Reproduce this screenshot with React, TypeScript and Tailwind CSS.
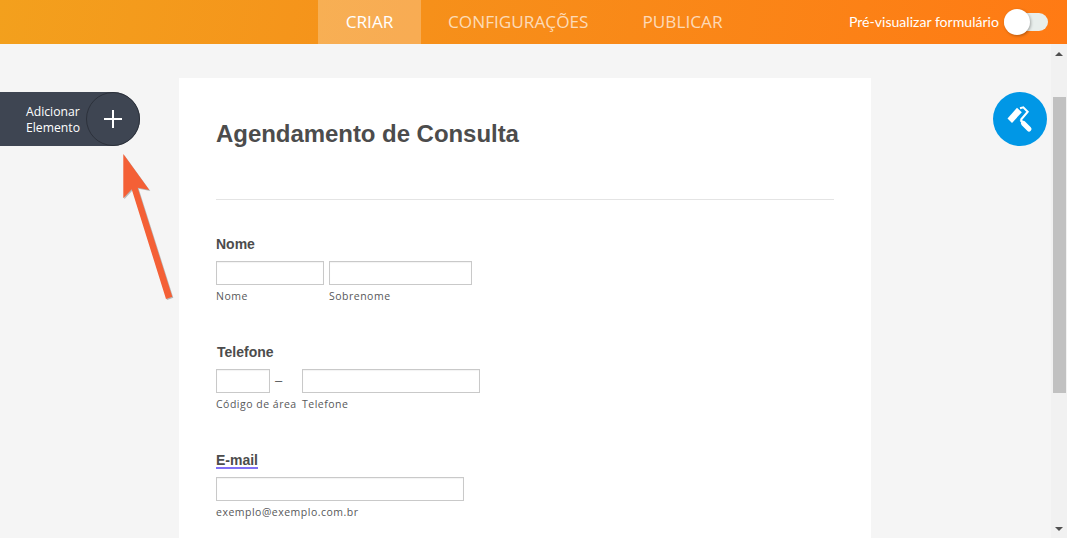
const Field = ({ width, caption }: { width: string; caption: string }) => (
  <div className={`${width} flex flex-col`}>
    <input type="text" className="h-6 w-full border border-[#c9c9c9] bg-white shadow-[inset_0_1px_1px_rgba(0,0,0,0.05)] outline-none" />
    <span className="mt-[5px] h-3 font-['Open_Sans',sans-serif] text-[10.5px] leading-3 tracking-[0.5px] whitespace-nowrap text-[#57585a]">{caption}</span>
  </div>
);

const App = () => {
  return (
    <div className="relative flex h-[538px] w-[1067px] flex-col overflow-hidden bg-[#f5f5f5] font-['Liberation_Sans',sans-serif]">
      <header className="flex h-11 shrink-0 items-stretch bg-[linear-gradient(100deg,#f3a01d_0%,#f6901a_40%,#ff7a14_100%)]">
        <nav className="ml-[318px] flex font-['Open_Sans',sans-serif] text-[17.2px]">
          <a className="flex w-[103px] items-center justify-center bg-white/25 text-white">CRIAR</a>
          <a className="ml-[27px] flex items-center text-white/70">CONFIGURAÇÕES</a>
          <a className="ml-[54px] flex items-center text-white/70">PUBLICAR</a>
        </nav>
        <div className="ml-auto mr-[19px] flex items-center">
          <span className="font-['Lato',sans-serif] text-[14.1px] text-white">Pré-visualizar formulário</span>
          <div className="relative ml-[5px] h-[18px] w-[44px] rounded-full bg-[#e8eeec]">
            <div className="absolute left-0 top-[-4px] size-[26px] rounded-full bg-white shadow-[1px_1px_3px_rgba(0,0,0,0.3)]" />
          </div>
        </div>
      </header>

      <div className="flex min-h-0 flex-1">
        <main className="flex-1 overflow-hidden pl-[179px] pt-[34px]">
          <div className="h-[500px] w-[692px] bg-white px-[37px]">
            <h1 className="flex h-[122px] items-center border-b border-[#e4e4e4] pb-[9px] text-2xl tracking-[-0.05px] font-bold text-[#4c4c4c]">
              Agendamento de Consulta
            </h1>

            <section className="mt-[36px]">
              <label className="block h-4 text-sm leading-4 font-bold text-[#4c4c4c]">Nome</label>
              <div className="mt-[9px] flex gap-[5px]">
                <Field width="w-[108px]" caption="Nome" />
                <Field width="w-[143px]" caption="Sobrenome" />
              </div>
            </section>

            <section className="mt-[42px]">
              <label className="ml-px block h-4 text-sm leading-4 font-bold text-[#4c4c4c]">Telefone</label>
              <div className="mt-[9px] flex">
                <Field width="w-[54px]" caption="Código de área" />
                <span className="ml-[5px] h-6 w-[27px] text-[13px] leading-6 text-[#57585a]">–</span>
                <Field width="w-[178px]" caption="Telefone" />
              </div>
            </section>

            <section className="mt-[42px]">
              <label className="block h-4 text-sm leading-4 font-bold text-[#4c4c4c] underline decoration-[#7f6ff5] decoration-2 underline-offset-[2px]">
                E-mail
              </label>
              <div className="mt-[9px]">
                <Field width="w-[248px]" caption="exemplo@exemplo.com.br" />
              </div>
            </section>
          </div>
        </main>

        <aside className="relative flex w-4 shrink-0 flex-col items-center bg-[#f1f1f1]">
          <div className="mt-2 size-0 border-x-[4px] border-b-[4px] border-x-transparent border-b-[#505050]" />
          <div className="mt-[41px] h-[296px] w-[13px] bg-[#c1c1c1]" />
          <div className="mt-auto mb-[7px] size-0 border-x-[4px] border-t-[4px] border-x-transparent border-t-[#505050]" />
        </aside>
      </div>

      <button className="absolute left-0 top-[92px] flex h-[54px] w-[140px] items-center rounded-r-full bg-[#3e4552] text-white">
        <span className="ml-[26px] w-[60px] pt-0.5 text-left font-['Open_Sans',sans-serif] text-[12.2px] leading-4">Adicionar Elemento</span>
        <span className="absolute left-[86px] top-0 flex size-[54px] items-center justify-center rounded-full border border-[#2c313b]">
          <svg width="20" height="20" viewBox="0 0 20 20" fill="none" stroke="white" strokeWidth="2">
            <path d="M10 1v18M1 10h18" />
          </svg>
        </span>
      </button>

      <svg className="absolute left-[120px] top-[152px] drop-shadow-[1px_1px_0.5px_rgba(0,0,0,0.25)]" width="56" height="150" viewBox="0 0 56 150">
        <path d="M3.3 2L29.3 38L17.7 35.7L52.3 144.7L46 147L11.7 37.3L3.3 46.3Z" fill="#f46036" />
      </svg>

      <button className="absolute left-[993px] top-[92px] size-[54px] rounded-full bg-[#0097e6]">
        <svg width="54" height="54" viewBox="0 0 54 54" fill="white">
          <path d="M14.5 26.5L24 15.8L28.8 20.2L19 31Z" />
          <path d="M27 16.2L30.3 15.3L34.7 19.7L27.7 28" fill="none" stroke="white" strokeWidth="2" />
          <path d="M27.7 28L30.3 31.3" fill="none" stroke="white" strokeWidth="2.5" />
          <path d="M30.5 31.5L36 37" fill="none" stroke="white" strokeWidth="5" strokeLinecap="round" />
        </svg>
      </button>
    </div>
  );
};

export default App;
